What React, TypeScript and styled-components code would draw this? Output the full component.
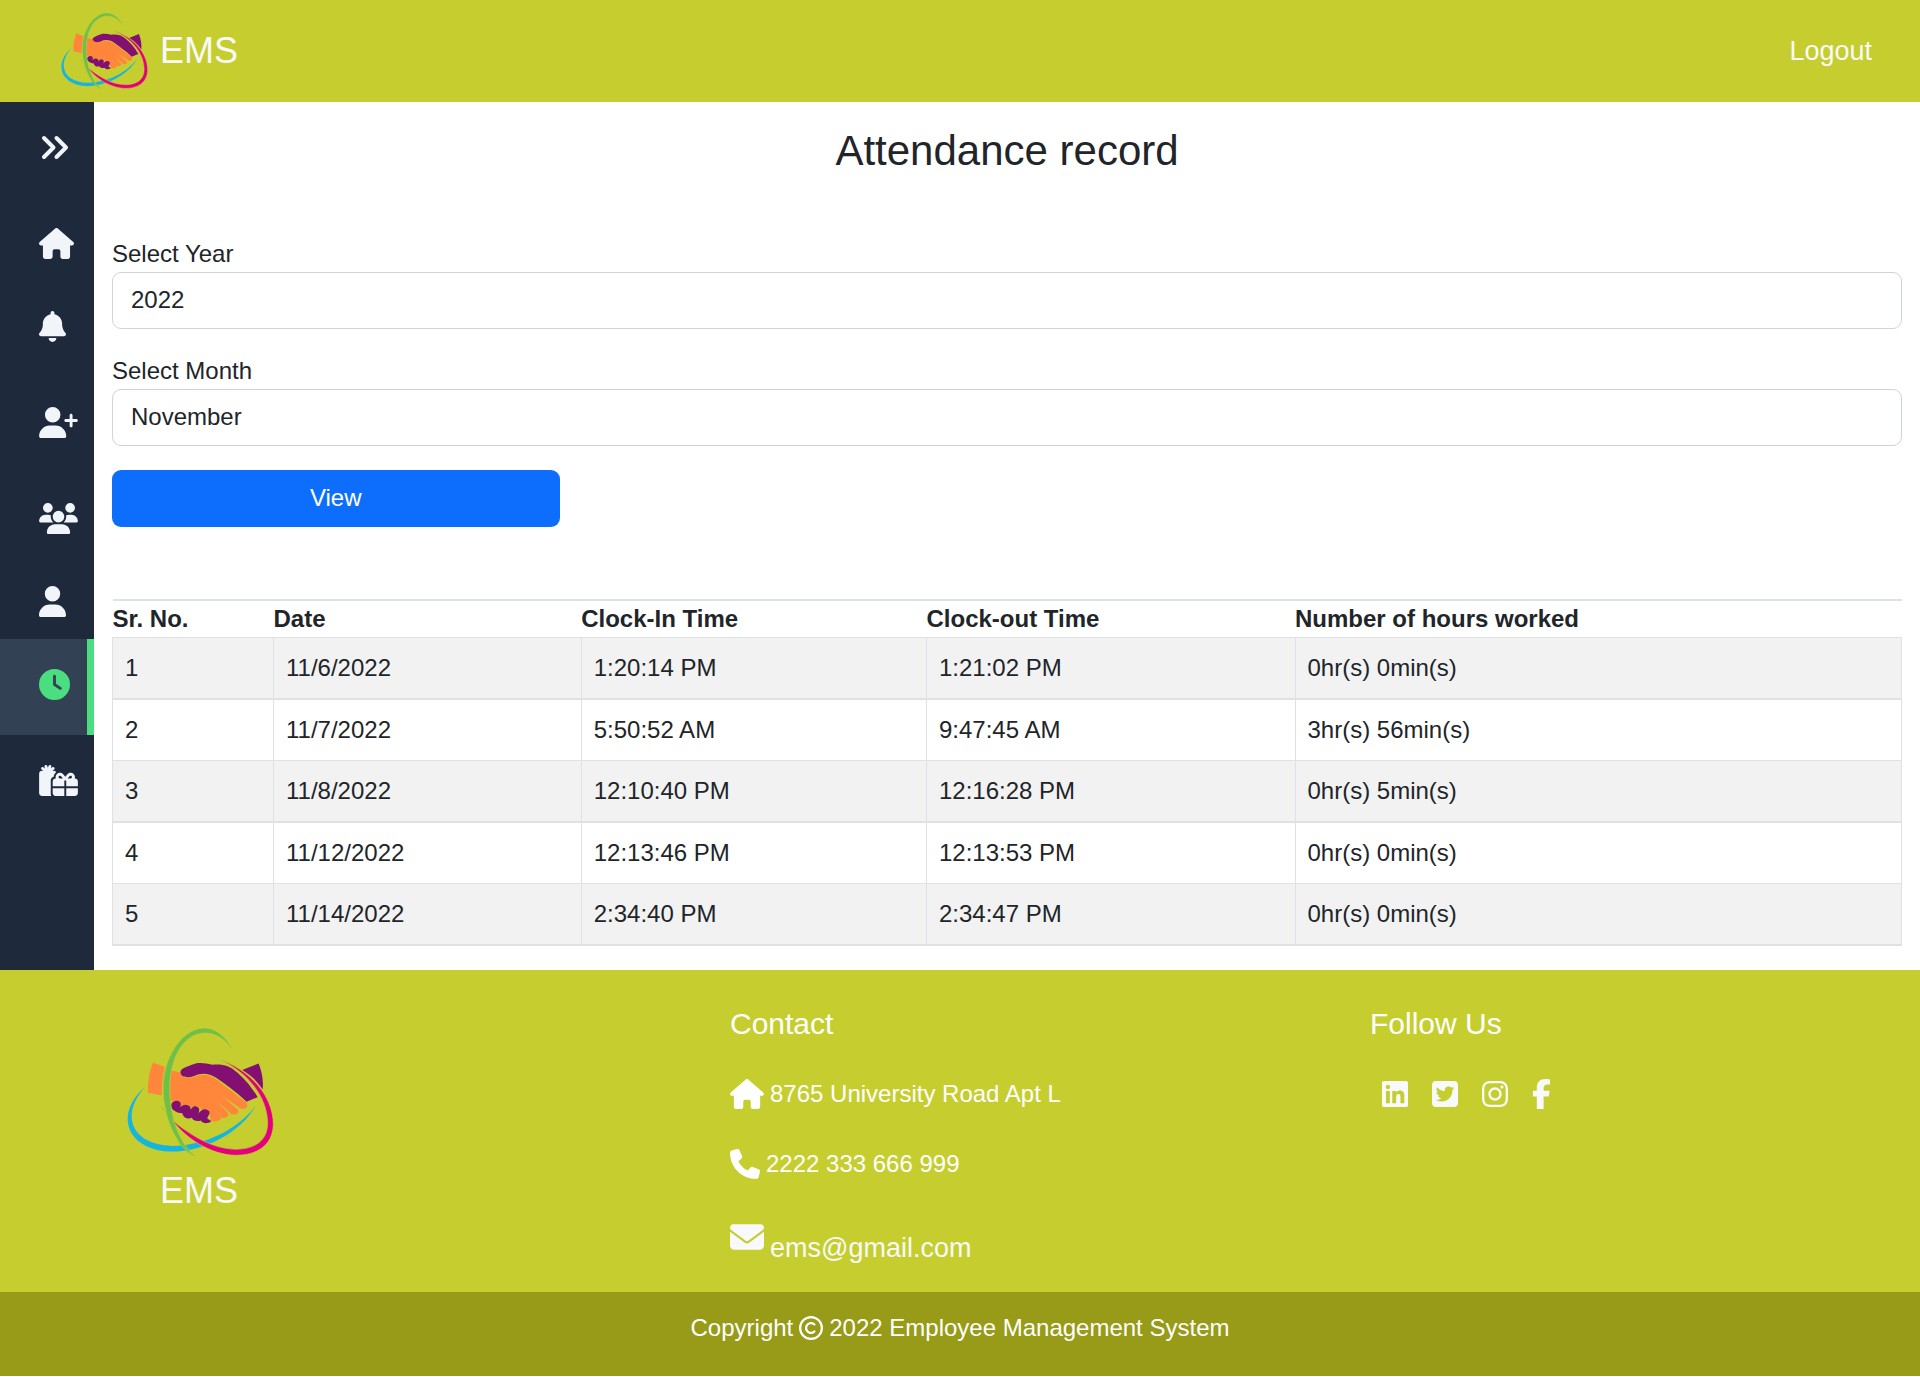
import React from "react";
import styled, { createGlobalStyle } from "styled-components";
import {
  FaBell,
  FaClock,
  FaEnvelope,
  FaFacebookF,
  FaGifts,
  FaHouse,
  FaInstagram,
  FaLinkedin,
  FaPhone,
  FaRegCopyright,
  FaSquareTwitter,
  FaUser,
  FaUserPlus,
  FaUsers,
} from "react-icons/fa6";

const GlobalStyle = createGlobalStyle`
  *, *::before, *::after { box-sizing: border-box; }
  body {
    margin: 0;
    background: #fff;
    color: #212529;
    font-family: "Liberation Sans", Arial, sans-serif;
    font-size: 24px;
    line-height: 36px;
  }
  svg { display: block; flex: none; }
  a { color: inherit; text-decoration: none; }
`;

const LIME = "#c6ce2f";

const Header = styled.header`
  display: flex;
  align-items: center;
  justify-content: space-between;
  padding: 13px 48px 13px 61px;
  background: ${LIME};
  color: #f8f9fa;
`;

const Brand = styled.a`
  display: flex;
  align-items: center;
  gap: 12px;
  font-size: 36px;
  line-height: 54px;
`;

const LogoBox = styled.svg<{ $width: number }>`
  width: ${(p) => p.$width}px;
  height: auto;
`;

const Glyph = styled.span<{ $width: number; $height: number }>`
  flex: none;
  display: block;

  svg {
    width: ${(p) => p.$width}px;
    height: ${(p) => p.$height}px;
  }
`;

const Logout = styled.a`
  font-size: 27px;
  line-height: 40px;
`;

const Body = styled.div`
  display: flex;
`;

const Sidebar = styled.nav`
  flex: none;
  width: 94px;
  background: #1e293b;
`;

const SideLink = styled.a<{ $active?: boolean; $short?: boolean }>`
  display: block;
  height: ${(p) => (p.$short ? 83 : 96)}px;
  padding: 30px 0 0 39px;
  color: ${(p) => (p.$active ? "#4ade80" : "#f1f5f9")};
  background: ${(p) => (p.$active ? "#334155" : "transparent")};
  border-right: ${(p) => (p.$active ? "7px solid #4ade80" : "0")};
`;

const Main = styled.main`
  flex: 1;
  min-width: 0;
  padding: 24px 18px;
`;

const Title = styled.h1`
  margin: 0 0 60px;
  font-size: 42px;
  line-height: 50px;
  font-weight: 400;
  text-align: center;
`;

const Form = styled.form`
  display: flex;
  flex-direction: column;
  gap: 24px;
  margin-bottom: 72px;
`;

const Field = styled.div`
  display: flex;
  flex-direction: column;
`;

const Select = styled.select`
  appearance: none;
  width: 100%;
  height: 57px;
  padding: 9px 18px;
  border: 1px solid #ced4da;
  border-radius: 9px;
  background: #fff;
  color: inherit;
  font: inherit;
`;

const ViewButton = styled.button`
  width: 25%;
  height: 57px;
  border: 0;
  border-radius: 9px;
  background: #0d6efd;
  color: #fff;
  font: inherit;
`;

const Table = styled.table`
  width: 100%;
  border-collapse: collapse;
  border-top: 2px solid #dee2e6;

  th {
    padding: 0;
    text-align: left;
    font-weight: 700;
  }
  th:nth-child(1) { width: 9%; }
  th:nth-child(2) { width: 17.2%; }
  th:nth-child(3) { width: 19.3%; }
  th:nth-child(4) { width: 20.6%; }
  td {
    padding: 12px;
    border: 1px solid #dee2e6;
  }
  tbody tr:nth-child(odd) td {
    background: #f2f2f2;
    border-bottom-width: 2px;
  }
`;

const Footer = styled.footer`
  background: ${LIME};
  color: #fff;
`;

const FooterColumns = styled.div`
  display: grid;
  grid-template-columns: repeat(3, 1fr);
  padding: 36px 0 24px;
`;

const FooterBrand = styled.div`
  padding: 22px 0 0 127px;
`;

const FooterBrandName = styled.div`
  padding: 8px 0 0 33px;
  font-size: 36px;
  line-height: 54px;
  color: #f8f9fa;
`;

const FooterColumn = styled.div`
  display: flex;
  flex-direction: column;
  gap: 34px;
  padding-left: 90px;
`;

const FooterTitle = styled.h2`
  margin: 0;
  font-size: 30px;
  line-height: 36px;
  font-weight: 400;
`;

const ContactRow = styled.div`
  display: flex;
  align-items: center;
  gap: 6px;
`;

const MailRow = styled.a`
  display: flex;
  align-items: flex-start;
  gap: 6px;
  padding-top: 4px;
  font-size: 27px;
  line-height: 40px;
  color: #f8f9fa;
`;

const MailText = styled.span`
  padding-top: 8px;
`;

const Socials = styled.div`
  display: flex;
  align-items: center;
  gap: 24px;
  height: 36px;
  padding-left: 12px;
  color: #f8f9fa;
`;

const Copyright = styled.div`
  display: flex;
  align-items: center;
  justify-content: center;
  gap: 6px;
  padding: 18px 0 30px;
  background: #979b17;
`;

function Logo({ width }: { width: number }) {
  return (
    <LogoBox $width={width} viewBox="80 86 440 384" role="img" aria-label="EMS logo">
      <path fill="#ff863b" d="M158 189 L193 203 C187 230 184 260 184 288 L143 280 C142 248 146 215 158 189Z" />
      <path
        fill="#ff863b"
        d="M212 213 L240 219 C243 234 262 238 282 232 C305 222 328 224 350 242 L437 309 C445 320 437 331 421 328 L362 287 L411 329 C419 340 407 348 393 344 L348 304 L384 343 C386 354 372 358 361 353 L336 318 L362 356 C360 364 343 368 331 364 L326 340 C326 329 312 328 305 334 C300 318 282 316 274 327 C268 313 252 313 244 320 C240 305 226 300 210 306 C207 275 207 245 212 213Z"
      />
      <path
        fill="#840f72"
        d="M240 218 C241 207 260 202 272 197 C290 187 312 190 335 196 C365 192 391 201 402 213 C428 232 453 262 471 293 L438 307 C408 278 374 254 347 235 C322 219 301 221 281 230 C262 237 240 234 240 218Z"
      />
      <path fill="#840f72" d="M425 212 L474 192 C484 215 489 245 486 270 C470 245 450 227 425 212Z" />
      <path
        fill="#840f72"
        d="M212 318 C213 304 233 299 240 310 C242 315 241 320 239 324 C248 312 265 314 270 324 C271 331 270 334 268 338 C273 317 291 316 296 328 C297 336 295 341 292 346 C300 328 319 324 327 337 C328 346 322 350 320 356 C325 360 331 362 332 366 C322 372 308 374 301 363 C291 367 278 364 274 355 C262 360 247 354 246 341 C234 342 211 332 212 318Z"
      />
      <path
        fill="#16b5df"
        d="M135 262 C100 290 80 330 82 362 C86 425 150 456 215 456 C310 456 420 400 466 318 C415 385 320 438 215 439 C150 437 98 410 94 355 C93 325 108 290 135 262Z"
      />
      <path
        fill="#6ec04a"
        stroke={LIME}
        strokeWidth="2"
        d="M403 162 C375 105 340 86 310 86 C240 89 188 180 188 265 C188 350 225 440 280 467 C240 430 208 360 208 265 C209 180 245 104 312 101 C345 100 378 120 403 162Z"
      />
      <path
        fill="#e3007c"
        stroke={LIME}
        strokeWidth="2"
        d="M347 176 C450 210 518 290 518 375 C516 441 465 467 405 467 C330 466 255 415 217 364 C270 405 330 447 405 449 C460 449 501 425 501 370 C499 290 440 215 347 176Z"
      />
      <path fill="none" stroke="#6ec04a" strokeWidth="2" d="M182 321 L190 332 M233 425 C246 446 262 459 280 467" />
    </LogoBox>
  );
}

function DoubleChevron() {
  return (
    <svg viewBox="0 0 31 31" fill="none" stroke="currentColor" strokeWidth="4" strokeLinecap="round" strokeLinejoin="round">
      <path d="M5 6 L14.5 15.5 L5 25 M17.5 6 L27 15.5 L17.5 25" />
    </svg>
  );
}

const NAV = [
  { label: "Expand menu", icon: DoubleChevron, width: 31 },
  { label: "Home", icon: FaHouse, width: 35, short: true },
  { label: "Notifications", icon: FaBell, width: 27 },
  { label: "Add employee", icon: FaUserPlus, width: 39 },
  { label: "Employees", icon: FaUsers, width: 39, short: true },
  { label: "Profile", icon: FaUser, width: 27, short: true },
  { label: "Attendance", icon: FaClock, width: 31, active: true },
  { label: "Benefits", icon: FaGifts, width: 39 },
];

const COLUMNS = ["Sr. No.", "Date", "Clock-In Time", "Clock-out Time", "Number of hours worked"];

const RECORDS = [
  ["1", "11/6/2022", "1:20:14 PM", "1:21:02 PM", "0hr(s) 0min(s)"],
  ["2", "11/7/2022", "5:50:52 AM", "9:47:45 AM", "3hr(s) 56min(s)"],
  ["3", "11/8/2022", "12:10:40 PM", "12:16:28 PM", "0hr(s) 5min(s)"],
  ["4", "11/12/2022", "12:13:46 PM", "12:13:53 PM", "0hr(s) 0min(s)"],
  ["5", "11/14/2022", "2:34:40 PM", "2:34:47 PM", "0hr(s) 0min(s)"],
];

const SOCIALS = [
  { label: "LinkedIn", icon: FaLinkedin, width: 26 },
  { label: "Twitter", icon: FaSquareTwitter, width: 26 },
  { label: "Instagram", icon: FaInstagram, width: 26 },
  { label: "Facebook", icon: FaFacebookF, width: 19 },
];

export default function App() {
  return (
    <>
      <GlobalStyle />
      <Header>
        <Brand href="#">
          <Logo width={87} />
          EMS
        </Brand>
        <Logout href="#">Logout</Logout>
      </Header>

      <Body>
        <Sidebar aria-label="Main">
          {NAV.map(({ label, icon: Icon, width, short, active }) => (
            <SideLink key={label} href="#" aria-label={label} $short={short} $active={active}>
              <Glyph $width={width} $height={31}>
                <Icon />
              </Glyph>
            </SideLink>
          ))}
        </Sidebar>

        <Main>
          <Title>Attendance record</Title>
          <Form onSubmit={(e) => e.preventDefault()}>
            <Field>
              <label htmlFor="year">Select Year</label>
              <Select id="year" defaultValue="2022">
                <option>2022</option>
              </Select>
            </Field>
            <Field>
              <label htmlFor="month">Select Month</label>
              <Select id="month" defaultValue="November">
                <option>November</option>
              </Select>
            </Field>
            <ViewButton type="submit">View</ViewButton>
          </Form>

          <Table>
            <thead>
              <tr>
                {COLUMNS.map((name) => (
                  <th key={name} scope="col">{name}</th>
                ))}
              </tr>
            </thead>
            <tbody>
              {RECORDS.map((row) => (
                <tr key={row[0]}>
                  {row.map((cell, i) => (
                    <td key={i}>{cell}</td>
                  ))}
                </tr>
              ))}
            </tbody>
          </Table>
        </Main>
      </Body>

      <Footer>
        <FooterColumns>
          <FooterBrand>
            <Logo width={147} />
            <FooterBrandName>EMS</FooterBrandName>
          </FooterBrand>
          <FooterColumn>
            <FooterTitle>Contact</FooterTitle>
            <ContactRow>
              <Glyph $width={34} $height={30}>
                <FaHouse />
              </Glyph>
              8765 University Road Apt L
            </ContactRow>
            <ContactRow>
              <Glyph $width={30} $height={30}>
                <FaPhone />
              </Glyph>
              2222 333 666 999
            </ContactRow>
            <MailRow href="#">
              <Glyph $width={34} $height={34}>
                <FaEnvelope />
              </Glyph>
              <MailText>ems@gmail.com</MailText>
            </MailRow>
          </FooterColumn>
          <FooterColumn>
            <FooterTitle>Follow Us</FooterTitle>
            <Socials>
              {SOCIALS.map(({ label, icon: Icon, width }) => (
                <a key={label} href="#" aria-label={label}>
                  <Glyph $width={width} $height={30}>
                    <Icon />
                  </Glyph>
                </a>
              ))}
            </Socials>
          </FooterColumn>
        </FooterColumns>
        <Copyright>
          Copyright{" "}
          <Glyph $width={24} $height={24}>
            <FaRegCopyright />
          </Glyph>{" "}
          2022 Employee Management System
        </Copyright>
      </Footer>
    </>
  );
}
